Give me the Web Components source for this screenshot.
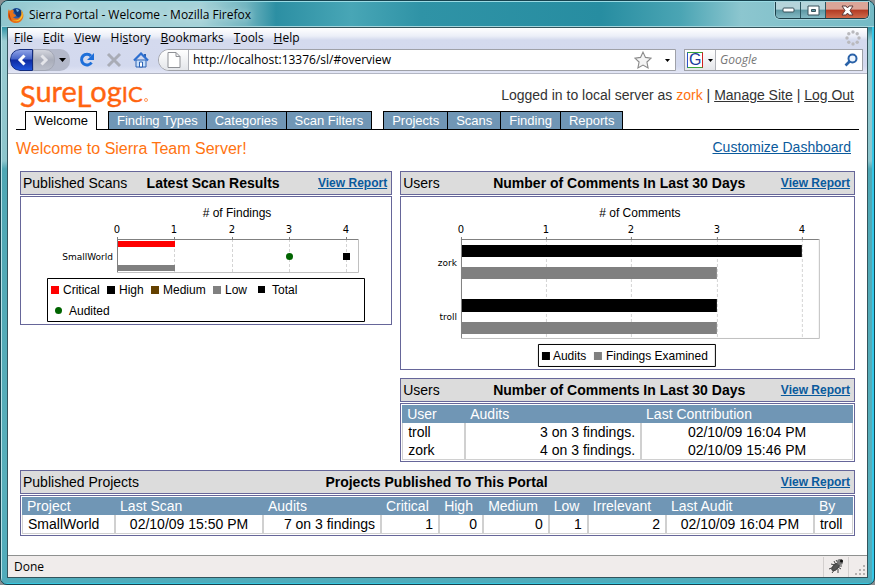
<!DOCTYPE html>
<html lang="en">
<head>
<meta charset="utf-8">
<title>Sierra Portal - Welcome</title>
<style>
  html, body { margin: 0; height: 100%; background: #8a8f92; }
</style>
</head>
<body>
<app-window>
  <title-bar slot="title">Sierra Portal - Welcome - Mozilla Firefox</title-bar>
  <menu-bar slot="chrome"></menu-bar>
  <nav-bar slot="chrome"></nav-bar>
  <portal-page></portal-page>
  <status-bar slot="status">Done</status-bar>
</app-window>

<script>
const define = (name, html, setup) => {
  const t = document.createElement('template');
  t.innerHTML = `<style>*{box-sizing:border-box} a{color:inherit}</style>` + html;
  customElements.define(name, class extends HTMLElement {
    constructor() {
      super();
      this.attachShadow({ mode: 'open' }).append(t.content.cloneNode(true));
    }
    connectedCallback() { if (setup) setup(this, this.shadowRoot); }
  });
};

define('app-window', `
<style>
  :host { display: flex; flex-direction: column; box-sizing: border-box; min-height: 100vh;
    border: 1px solid #17434f; border-radius: 8px 8px 7px 7px; padding: 0 6px 6px;
    background:
      linear-gradient(90deg, #b9e2e8 0 1px, transparent 1px calc(100% - 2px), #36c8e8 calc(100% - 2px)) ,
      linear-gradient(0deg, #36c8e0 0 1px, transparent 1px),
      linear-gradient(180deg, #3796a8 0, #2f93a5 26px, #9ccdd3 40px, #8cc5cc 160px, #4fa7b4 168px, #58afbb 480px, #4fabbb 100%);
    font-family: "Open Sans", "Noto Sans", sans-serif; font-size: 12px; color: #000; overflow: hidden; }
  .inner { flex: 1; display: flex; flex-direction: column; border: 1px solid #33545c; background: #fff; }
  .chrome { background: linear-gradient(#fff 0, #eceff8 8px, #d4daee 12px, #d3d9ee 38px, #e3e6f5 100%); border-bottom: 1px solid #b3b6c4; }
  main { flex: 1; }
</style>
<slot name="title"></slot>
<div class="inner">
  <div class="chrome"><slot name="chrome"></slot></div>
  <main><slot></slot></main>
  <slot name="status"></slot>
</div>`);

define('title-bar', `
<style>
  :host { display: flex; align-items: center; box-sizing: border-box; height: 26px; margin: 0 -6px; padding: 0 5px 0 7px;
    border-top: 1px solid #9adbe4;
    background: linear-gradient(0deg, #a5d5dc 0 1px, transparent 1px),
      linear-gradient(90deg, #8fc6ce 0, #a6d2d8 60px, #a6d2d8 200px, #72b5c0 245px, #2c8fa3 275px, #48a6b6 350px, #2f93a6 420px, #278da1 600px, #4ba5b4 680px, #8cc6cf 740px, #74bac5 100%); }
  .logo { flex: none; }
  h1 { flex: 1; margin: 0 0 0 5px; font-size: 12px; line-height: 16px; font-weight: 400; white-space: nowrap; text-shadow: 0 0 6px #d8eef0; }
  .controls { display: flex; align-self: flex-start; border: 1px solid #1c3f49; border-top: 0; border-radius: 0 0 5px 5px; overflow: hidden; box-shadow: 0 0 0 1px #a6d4dc; }
  button { display: grid; place-items: center; width: 25px; height: 16px; padding: 0; border: 0; border-right: 1px solid #2c5560;
    background: linear-gradient(#b5d4da 0 45%, #5d97a3 50%, #84bac4); }
  button:last-child { width: 42px; border: 0; background: linear-gradient(#dba598 0 45%, #b33a22 50%, #cf6a4b); }
</style>
<svg class="logo" width="16" height="16" viewBox="0 0 16 16" aria-hidden="true">
  <circle cx="8.500" cy="7.500" r="6.500" fill="#2a5fb0"/>
  <path d="M5 3c2-2 6-2 8 1 1 2 0 5-2 6-2 0-4-2-4-4z" fill="#143a78"/>
  <path d="M8 2c2 0 3 1 3 2L9 5z" fill="#6fb4ea"/>
  <path d="M1 2c0 1 1 2 1 2C4 2 5 3 6 4c-1 1-1 2 0 3l2 1c0 2-2 2-3 2 2 2 5 2 7 0s2-5 1-7c2 2 3 5 2 8-1 3-4 5-7 5s-7-2-8-6C-1 7 0 4 1 2z" fill="#e8721a"/>
  <path d="M13 3c3 3 2 8-1 10-3 2-6 1-7 0 3 1 6 0 7-2 2-2 2-5 1-8z" fill="#f9c52c"/>
  <path d="M1 5c-1 3 0 7 3 9-2-3-2-6-3-9z" fill="#b23a0c"/>
</svg>
<h1><slot></slot></h1>
<div class="controls">
  <button aria-label="Minimize"><svg width="13" height="6" viewBox="0 0 13 6"><rect x="1" y="1" width="11" height="4" rx="1" fill="#fff" stroke="#36505a"/></svg></button>
  <button aria-label="Maximize"><svg width="13" height="11" viewBox="0 0 13 11"><path d="M1 1h11v9H1zM4.500 4.500h4v2h-4z" fill="#fff" fill-rule="evenodd" stroke="#36505a"/></svg></button>
  <button aria-label="Close"><svg width="13" height="11" viewBox="0 0 13 11"><path d="M1 1h4l1.500 2L8 1h4L9 5.500l3 4.500H8L6.500 8 5 10H1l3-4.500z" fill="#fff" stroke="#5b3a3a"/></svg></button>
</div>`);

define('menu-bar', `
<style>
  :host { display: flex; align-items: center; justify-content: space-between; height: 19px; padding: 0 6px; }
  nav { display: flex; gap: 10px; }
  button { font: inherit; line-height: 16px; border: 0; padding: 0; background: none; color: #000; }
</style>
<nav>
  <button><u>F</u>ile</button><button><u>E</u>dit</button><button><u>V</u>iew</button><button>Hi<u>s</u>tory</button><button><u>B</u>ookmarks</button><button><u>T</u>ools</button><button><u>H</u>elp</button>
</nav>
<svg width="16" height="16" viewBox="0 0 16 16" fill="#b9b9bd" aria-hidden="true">
  <circle cx="8" cy="2" r="1.700"/><circle cx="12.200" cy="3.800" r="1.700"/><circle cx="14" cy="8" r="1.700"/><circle cx="12.200" cy="12.200" r="1.700"/>
  <circle cx="8" cy="14" r="1.700"/><circle cx="3.800" cy="12.200" r="1.700"/><circle cx="2" cy="8" r="1.700"/><circle cx="3.800" cy="3.800" r="1.700"/>
</svg>`);

define('nav-bar', `
<style>
  :host { display: flex; align-items: center; height: 22px; padding: 2px 4px 2px 2px; }
  button { border: 0; padding: 0; background: none; display: grid; place-items: center; flex: none; }
  .history { display: flex; height: 22px; border-radius: 10px; background: #b4b9ca; overflow: hidden; flex: none; }
  .back { width: 23px; background: linear-gradient(#8fa3e6 0, #4463c8 45%, #0d2aa0 50%, #1f55dc); border: 1px solid #122a7c; border-radius: 10px 0 0 10px; }
  .fwd { width: 22px; background: linear-gradient(#d4d6de, #a9adba 50%, #bcc0cc); border: 1px solid #a3a7b5; border-radius: 0 10px 10px 0; }
  .drop { width: 15px; }
  .tools { display: flex; gap: 11px; margin: 0 9px; }
  .tools button { width: 16px; height: 18px; }
  .field { display: flex; align-items: center; height: 22px; background: #fff; border: 1px solid #9fa1a8; }
  .url { flex: 1; border-radius: 11px 0 0 11px; overflow: hidden; margin-right: 8px; }
  .page { width: 30px; height: 20px; background: linear-gradient(#fff, #e4e6ea); border-right: 1px solid #b0b2b8; }
  input { flex: 1; min-width: 0; border: 0; outline: 0; background: none; font: inherit; line-height: 16px; padding: 0 0 0 4px; color: #000; }
  .url button + input + button { margin-right: 9px; }
  .url button:last-child { width: 13px; margin-right: 1px; }
  .search { width: 179px; }
  .search input::placeholder { color: #777; font-style: italic; opacity: 1; }
  .engine { display: flex; align-items: center; justify-content: space-around; width: 31px; height: 20px; border-right: 1px solid #b0b2b8; background: linear-gradient(#fff, #e4e6ea); }
  .g { width: 16px; height: 16px; border: 1px solid #3aa63a; border-left-color: #2d52c8; border-right-color: #d02020; background: #fff; font: 16px/14px "Liberation Sans", sans-serif; color: #1a3a9c; text-align: center; }
  .go { width: 22px; }
</style>
<div class="history">
  <button class="back" aria-label="Back"><svg width="10" height="12" viewBox="0 0 10 12"><path d="M7.500 1.500 3 6l4.500 4.500" fill="none" stroke="#fff" stroke-width="3"/></svg></button>
  <button class="fwd" aria-label="Forward"><svg width="10" height="12" viewBox="0 0 10 12"><path d="M2.500 1.500 7 6l-4.500 4.500" fill="none" stroke="#e4e5ea" stroke-width="3"/></svg></button>
  <button class="drop" aria-label="Recent pages"><svg width="7" height="4" viewBox="0 0 7 4"><path d="M0 0h7L3.500 4z"/></svg></button>
</div>
<div class="tools">
  <button aria-label="Reload"><svg width="16" height="16" viewBox="0 0 16 16"><path d="M12.500 10.500A5.400 5.400 0 1 1 12 4" fill="none" stroke="#1e6fd9" stroke-width="3"/><path d="M15 1v7H8z" fill="#1e6fd9"/></svg></button>
  <button aria-label="Stop"><svg width="16" height="16" viewBox="0 0 16 16"><path d="m2 2 12 12M14 2 2 14" stroke="#a9acb6" stroke-width="3"/></svg></button>
  <button aria-label="Home"><svg width="16" height="16" viewBox="0 0 16 16"><path d="M3 8h10v7H3z" fill="#c9e0fa" stroke="#2c62b4"/><path d="M6.500 10h3v5h-3z" fill="#fff" stroke="#2c62b4"/><path d="M11 2h2v4h-2z" fill="#2c62b4"/><path d="m1 8.500 7-7 7 7" fill="none" stroke="#2d6fd0" stroke-width="2.200"/></svg></button>
</div>
<div class="field url">
  <button class="page" aria-label="Site identity"><svg width="14" height="16" viewBox="0 0 14 16"><path d="M1 .5h8l4 4v11H1zM9 .5v4h4" fill="#fff" stroke="#8f9196"/></svg></button>
  <input aria-label="Address" value="http://localhost:13376/sl/#overview">
  <button aria-label="Bookmark this page"><svg width="18" height="18" viewBox="0 0 16 16"><path d="m8 1 2.200 4.700 5 .6-3.700 3.500 1 5.200L8 12.500 3.500 15l1-5.200L.8 6.300l5-.6z" fill="#f4f4f4" stroke="#8a8a8a"/></svg></button>
  <button aria-label="Show history"><svg width="5" height="3" viewBox="0 0 5 3"><path d="M0 0h5L2.500 3z"/></svg></button>
</div>
<div class="field search">
  <button class="engine" aria-label="Choose search engine"><span class="g">G</span><svg width="5" height="3" viewBox="0 0 5 3"><path d="M0 0h5L2.500 3z"/></svg></button>
  <input aria-label="Search" placeholder="Google">
  <button class="go" aria-label="Search"><svg width="14" height="14" viewBox="0 0 14 14"><circle cx="8.500" cy="5.500" r="4" fill="#eef6ff" stroke="#2a62a8" stroke-width="2"/><path d="M5.500 8.500 1.500 12.500" stroke="#2a62a8" stroke-width="2.600"/></svg></button>
</div>`);

define('status-bar', `
<style>
  :host { display: flex; align-items: center; box-sizing: border-box; height: 22px; border-top: 1px solid #8f9190; background: #f0eceb; padding-left: 6px; }
  span { flex: 1; }
  .bug { display: grid; place-items: center; width: 26px; height: 20px; border: 1px solid #d3cfce; border-width: 0 1px; }
  .grip { align-self: flex-end; margin-left: 5px; width: 13px; height: 13px; }
</style>
<span><slot></slot></span>
<div class="bug"><svg width="17" height="17" viewBox="0 0 17 17" fill="none" stroke="#444" aria-label="Debugger">
  <path d="M3 6l4 1M6 3l2 4M1 11l5-2M4 15l3-4M10 15l0-4M13 11l-3-2M8 2l2 3M14 8l-4 0" />
  <ellipse cx="7.500" cy="9" rx="2.400" ry="4.500" transform="rotate(45 7.500 9)" fill="#555"/>
  <circle cx="12" cy="4" r="3" fill="#777" stroke="none"/><circle cx="13.500" cy="3" r="1.500" fill="#111" stroke="none"/>
</svg></div>
<svg class="grip" viewBox="0 0 13 13" fill="#b5b1b0" aria-hidden="true"><path d="M9 1h2v2H9zM9 5h2v2H9zM5 5h2v2H5zM9 9h2v2H9zM5 9h2v2H5zM1 9h2v2H1z"/></svg>`);

define('portal-page', `
<style>
  :host { display: block; padding: 0 8px 12px; font-family: "Liberation Sans", Arial, sans-serif; font-size: 14px; line-height: 18px; }
  header { display: flex; justify-content: space-between; align-items: flex-start; padding: 0 5px 0 4px; height: 37px; }
  .account { margin: 11px 0 0; color: #333; line-height: 20px; }
  .account b { font-weight: 400; color: #ff7310; }
  .intro { display: flex; justify-content: space-between; align-items: flex-start; padding: 7px 8px 0 0; height: 41px; }
  h2 { margin: 0; padding-top: 2px; font-size: 16px; line-height: 20px; font-weight: 400; color: #ff7310; }
  .intro a { color: #0a5a9c; line-height: 20px; }
  .board { display: grid; grid-template-columns: 9fr 11fr; gap: 8px; padding: 0 4px; align-items: start; }
  .stack { display: grid; gap: 8px; }
  .wide { grid-column: 1 / -1; }
  .late { --lead: 115fr; } .early { --lead: 86fr; }
</style>
<header>
  <sure-logo></sure-logo>
  <p class="account">Logged in to local server as <b>zork</b> | <a href="#site">Manage Site</a> | <a href="#logout">Log Out</a></p>
</header>
<tab-strip></tab-strip>
<div class="intro"><h2>Welcome to Sierra Team Server!</h2><a href="#customize">Customize Dashboard</a></div>
<div class="board">
  <portal-panel class="late" category="Published Scans" heading="Latest Scan Results"><findings-chart></findings-chart></portal-panel>
  <div class="stack">
    <portal-panel class="early" category="Users" heading="Number of Comments In Last 30 Days"><comments-chart></comments-chart></portal-panel>
    <portal-panel class="early" category="Users" heading="Number of Comments In Last 30 Days"><users-table></users-table></portal-panel>
  </div>
  <portal-panel class="wide" category="Published Projects" heading="Projects Published To This Portal"><projects-table></projects-table></portal-panel>
</div>`);

define('sure-logo', `
<style>:host { display: block; } svg { display: block; overflow: visible; }
  text { font-family: Lato, sans-serif; fill: #ff6410; stroke: #ff6410; stroke-width: .4px; }</style>
<svg width="132" height="41" viewBox="0 -8 132 41" role="img" aria-label="SureLogic">
  <text x="0" y="20"><tspan font-size="29" dy="5">S</tspan><tspan font-size="29" dy="-5">ure</tspan><tspan font-size="29" dy="5">L</tspan><tspan font-size="29" dy="-5">og</tspan><tspan font-size="22">IC</tspan></text>
  <circle cx="126" cy="18" r="1.500" fill="none" stroke="#ff9a5c"/>
</svg>`);

define('tab-strip', `
<style>
  :host { display: flex; align-items: flex-end; border-bottom: 1px solid #000; padding-left: 9px; font-size: 13px; line-height: 16px; }
  div { display: flex; margin-right: 11px; }
  a { padding: 1px 8px 0; border: 1px solid #000; border-bottom: 0; margin-right: -1px; background: #7096b5; color: #fff; text-decoration: none; }
  div > a:last-child { margin-right: 0; }
  a.current { background: #fff; color: #000; margin-bottom: -1px; padding-bottom: 1px; }
</style>
<div><a class="current" href="#overview">Welcome</a></div>
<div><a href="#types">Finding Types</a><a href="#categories">Categories</a><a href="#filters">Scan Filters</a></div>
<div><a href="#projects">Projects</a><a href="#scans">Scans</a><a href="#finding">Finding</a><a href="#reports">Reports</a></div>`);

define('portal-panel', `
<style>
  :host { display: grid; gap: 1px; min-width: 0; }
  header, section { border: 1px solid #666699; }
  header { display: grid; grid-template-columns: minmax(0, var(--lead, 100fr)) auto minmax(0, 100fr); align-items: center; padding: 0 4px 0 2px; height: 24px; background: #dcdcdc; white-space: nowrap; }
  h3 { margin: 0; font-size: 14px; line-height: 20px; font-weight: 700; }
  a { justify-self: end; font-size: 12px; font-weight: 700; color: #0a5a9c; }
  section { padding: 1px; }
</style>
<header><span></span><h3></h3><a href="#report">View Report</a></header>
<section><slot></slot></section>`, (el, root) => {
  root.querySelector('span').textContent = el.getAttribute('category');
  root.querySelector('h3').textContent = el.getAttribute('heading');
});

const chartStyle = `<style>
  :host { display: block; } svg { display: block; margin: 0 auto; max-width: 100%; }
  text { font: 12px "Liberation Sans", Arial, sans-serif; fill: #000; }
  .tick { font: 10px "DejaVu Sans", sans-serif; text-anchor: middle; } .cat { font: 9px "DejaVu Sans", sans-serif; text-anchor: end; }
  .mid { text-anchor: middle; }
  .grid { stroke: #d4d4d4; stroke-dasharray: 3 2; } .axis { stroke: #808080; } .frame { stroke: #c0c0c0; fill: none; }
</style>`;

/* Ticks, grid lines and frame for a horizontal bar plot. */
const plot = (x, y, w, h, step) => {
  let s = `<path class="frame" d="M${x + w}.500 ${y}v${h}.500H${x}"/>`;
  for (let i = 0; i < 5; i++) {
    const gx = x + Math.round(i * step);
    s += `<text class="tick" x="${gx}" y="${y - 6}">${i}</text>`;
    if (i) s += `<path class="grid" d="M${gx}.500 ${y}v${h}"/>`;
    s += `<path class="axis" d="M${gx}.500 ${y - 2}v3"/>`;
  }
  return s + `<path class="axis" d="M${x} ${y}.500h${w}M${x}.500 ${y}v${h}"/>`;
};

define('findings-chart', chartStyle + `
<svg width="368" height="125" viewBox="22 198 368 125" role="img">
  <text class="mid" x="237" y="217"># of Findings</text>
  ${plot(117, 239, 241, 33, 57.3)}
  <text class="cat" x="113" y="260">SmallWorld</text>
  <path d="M118 241h57v6h-57z" fill="#f00"/><path d="M118 265h57v6h-57z" fill="#808080"/>
  <circle cx="289.500" cy="256.500" r="3.500" fill="#006400"/><path d="M343 253h7v7h-7z"/>
  <path d="M47.500 278.500h317v43h-317z" fill="#fff" stroke="#000"/>
  <path d="M51 286h8v8h-8z" fill="#f00"/><text x="63" y="294">Critical</text>
  <path d="M107 286h8v8h-8z"/><text x="119" y="294">High</text>
  <path d="M151 286h8v8h-8z" fill="#644100"/><text x="163" y="294">Medium</text>
  <path d="M213 286h8v8h-8z" fill="#808080"/><text x="225" y="294">Low</text>
  <path d="M258 286h7v7h-7z"/><text x="272" y="294">Total</text>
  <circle cx="58.500" cy="310.500" r="3.500" fill="#006400"/><text x="69" y="315">Audited</text>
</svg>`);

define('comments-chart', chartStyle + `
<svg width="451" height="170" viewBox="402 198 451 170" role="img">
  <text class="mid" x="640" y="217"># of Comments</text>
  ${plot(461, 239, 358, 99, 85.2)}
  <text class="cat" x="457" y="266">zork</text><text class="cat" x="457" y="320">troll</text>
  <path d="M462 245h340v12H462zM462 299h255v13H462z"/>
  <path d="M462 267h255v12H462zM462 322h255v12H462z" fill="#808080"/>
  <path d="M538.500 344.500h177v22h-177z" fill="#fff" stroke="#000"/>
  <path d="M542 352h8v8h-8z"/><text x="553" y="360">Audits</text>
  <path d="M594 352h8v8h-8z" fill="#808080"/><text x="606" y="360">Findings Examined</text>
</svg>`);

const tableStyle = `<style>
  :host { display: block; }
  table { width: 100%; table-layout: fixed; border-spacing: 0; white-space: nowrap; line-height: 18px; }
  th { background: #7096b5; color: #fff; font-weight: 400; text-align: left; padding: 0 5px; }
  td { border: 1px solid #d0d0d0; border-width: 0 1px; padding: 0 5px; height: 18px; }
  tr:last-child td { border-bottom-width: 1px; }
  .r { text-align: right; } .c { text-align: center; }
</style>`;

define('users-table', tableStyle + `
<table>
  <colgroup><col style="width:14%"><col style="width:39%"><col style="width:47%"></colgroup>
  <thead><tr><th>User</th><th>Audits</th><th>Last Contribution</th></tr></thead>
  <tbody>
    <tr><td>troll</td><td class="r">3 on 3 findings.</td><td class="c">02/10/09 16:04 PM</td></tr>
    <tr><td>zork</td><td class="r">4 on 3 findings.</td><td class="c">02/10/09 15:46 PM</td></tr>
  </tbody>
</table>`);

define('projects-table', tableStyle + `
<table>
  <colgroup>${[11.2, 17.8, 14.2, 7, 5.3, 7.9, 4.7, 9.4, 17.8, 4.7].map(w => `<col style="width:${w}%">`).join('')}</colgroup>
  <thead><tr>${['Project', 'Last Scan', 'Audits', 'Critical', 'High', 'Medium', 'Low', 'Irrelevant', 'Last Audit', 'By'].map(t => `<th>${t}</th>`).join('')}</tr></thead>
  <tbody><tr><td>SmallWorld</td><td class="c">02/10/09 15:50 PM</td><td class="r">7 on 3 findings</td><td class="r">1</td><td class="r">0</td><td class="r">0</td><td class="r">1</td><td class="r">2</td><td class="c">02/10/09 16:04 PM</td><td>troll</td></tr></tbody>
</table>`);
</script>
</body>
</html>
